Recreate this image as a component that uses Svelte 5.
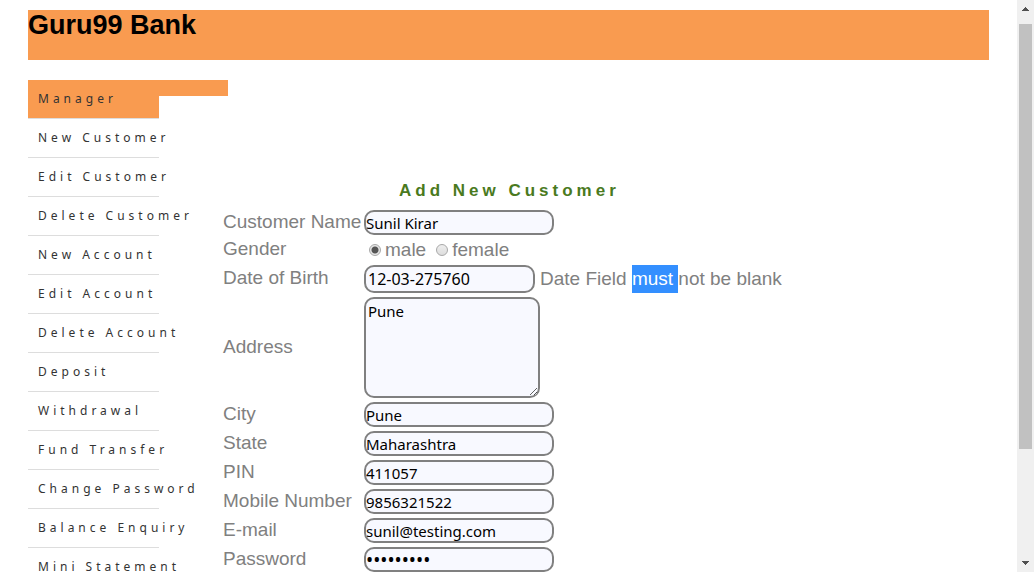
<script>
  const links = [
    'Manager', 'New Customer', 'Edit Customer', 'Delete Customer', 'New Account',
    'Edit Account', 'Delete Account', 'Deposit', 'Withdrawal', 'Fund Transfer',
    'Change Password', 'Balance Enquiry', 'Mini Statement'
  ];
  const contact = [
    { id: 'city', label: 'City', value: 'Pune', type: 'text' },
    { id: 'state', label: 'State', value: 'Maharashtra', type: 'text' },
    { id: 'pin', label: 'PIN', value: '411057', type: 'text' },
    { id: 'mobile', label: 'Mobile Number', value: '9856321522', type: 'text' },
    { id: 'email', label: 'E-mail', value: 'sunil@testing.com', type: 'text' },
    { id: 'password', label: 'Password', value: 'sunil1234', type: 'password' }
  ];
  let gender = $state('male');
</script>

<div class="window">
  <div class="page">
    <header><h1>Guru99 Bank</h1></header>
    <div class="columns">
      <nav>
        <ul>
          {#each links as link, i}
            <li><a href="#top" class:current={i === 0}>{link}</a></li>
          {/each}
        </ul>
      </nav>
      <main>
        <form>
          <h2>Add New Customer</h2>
          <label class="caption" for="name">Customer Name</label>
          <input class="field" id="name" type="text" value="Sunil Kirar" />
          <span class="caption" id="gender">Gender</span>
          <div class="radios" role="radiogroup" aria-labelledby="gender">
            <label><input type="radio" name="gender" value="male" bind:group={gender} />male</label>
            <label><input type="radio" name="gender" value="female" bind:group={gender} />female</label>
          </div>
          <label class="caption" for="dob">Date of Birth</label>
          <div class="date">
            <input class="field" id="dob" type="text" value="12-03-275760" />
            <span class="message">Date Field <span class="selected">{'must '}</span>not be blank</span>
          </div>
          <label class="caption" for="address">Address</label>
          <textarea class="field" id="address">Pune</textarea>
          {#each contact as row}
            <label class="caption" for={row.id}>{row.label}</label>
            <input class="field" id={row.id} type={row.type} value={row.value} />
          {/each}
        </form>
      </main>
    </div>
  </div>
  <div class="scrollbar" aria-hidden="true">
    <svg width="17" height="24" viewBox="0 0 17 24" shape-rendering="crispEdges">
      <path d="M8 7h1v1h1v1h1v1h1v1H5v-1h1V9h1V8h1z" fill="#505050" />
    </svg>
    <div class="track"><div class="thumb"></div></div>
    <svg width="17" height="17" viewBox="0 0 17 17" shape-rendering="crispEdges">
      <path d="M5 6h7v1h-1v1h-1v1H9v1H8V9H7V8H6V7H5z" fill="#505050" />
    </svg>
  </div>
</div>

<style>
  :global(body) {
    margin: 0;
    background: #fff;
  }
  .window {
    display: flex;
    height: 100vh;
    overflow: hidden;
    font-family: "Liberation Sans", Arial, sans-serif;
  }
  .page {
    flex: 1;
    min-width: 0;
    padding: 10px 28px 0;
    overflow: hidden;
  }
  header {
    height: 50px;
    background: #f99b50;
  }
  h1 {
    margin: 0;
    font-size: 27px;
    line-height: 30px;
    color: #000;
  }
  .columns {
    display: flex;
    margin-top: 20px;
  }
  nav {
    flex: none;
    width: 195px;
  }
  ul {
    width: 200px;
    margin: 0;
    padding: 0;
    list-style: none;
    background: linear-gradient(#f99b50, #f99b50) no-repeat 0 0 / 200px 16px;
  }
  li {
    width: 131px;
  }
  a {
    display: block;
    padding: 0 10px;
    border-bottom: 1px solid #ddd;
    font-family: "Noto Sans", "Open Sans", sans-serif;
    font-size: 12px;
    line-height: 38px;
    letter-spacing: 4px;
    white-space: nowrap;
    text-decoration: none;
    color: #333;
  }
  a.current {
    background: #f99b50;
  }
  main {
    flex: 1;
    min-width: 0;
    padding-top: 101px;
  }
  form {
    display: grid;
    grid-template-columns: 137px 1fr;
    gap: 4px;
    align-items: center;
    font-size: 19px;
    line-height: 22px;
    color: #808080;
    white-space: nowrap;
  }
  h2 {
    grid-column: 1 / -1;
    margin: 0;
    padding: 0 0 5px 176px;
    font-size: 17px;
    line-height: 20px;
    letter-spacing: 4px;
    color: #4a7a1e;
  }
  .caption {
    line-height: 20px;
    padding-bottom: 2px;
  }
  .field {
    box-sizing: border-box;
    width: 190px;
    height: 25px;
    margin: 0;
    padding: 0;
    border: 2px solid #808080;
    border-radius: 10px;
    background: #f8f9ff;
    color: #000;
    font-family: "Noto Sans", sans-serif;
    font-size: 15px;
    outline: none;
  }
  #dob {
    width: 171px;
    height: 28px;
    padding: 0 2px;
    font-size: 16px;
  }
  .field[type="password"] {
    font-size: 19px;
  }
  textarea.field {
    width: 176px;
    height: 101px;
    padding: 2px;
    line-height: 20px;
    resize: both;
  }
  .radios {
    display: flex;
    gap: 10px;
    padding-left: 5px;
  }
  .radios label {
    display: flex;
    align-items: center;
    gap: 4px;
  }
  .radios input {
    appearance: none;
    box-sizing: border-box;
    width: 12px;
    height: 12px;
    margin: 0;
    border: 1px solid #a8a8a8;
    border-radius: 50%;
    background: linear-gradient(#eee, #ddd);
  }
  .radios input:checked {
    background: radial-gradient(circle, #555 0 3px, #e6e6e6 4px);
  }
  .date {
    display: flex;
    align-items: center;
    gap: 5px;
  }
  .message {
    line-height: 28px;
  }
  .selected {
    display: inline-block;
    white-space: pre;
    background: #338fff;
    color: #fff;
  }
  .scrollbar {
    flex: none;
    display: flex;
    flex-direction: column;
    width: 17px;
    background: #f0f0f0;
  }
  .scrollbar svg {
    display: block;
    flex: none;
  }
  .track {
    flex: 1;
    padding: 0 2px;
  }
  .thumb {
    height: 80%;
    background: #c1c1c1;
  }
</style>
